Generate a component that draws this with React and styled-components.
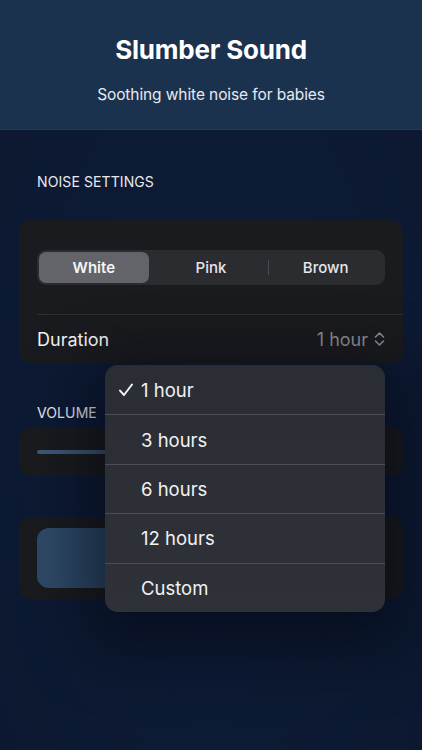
import React from 'react'
import styled, { createGlobalStyle } from 'styled-components'

const GlobalStyle = createGlobalStyle`
  html, body {
    margin: 0;
    padding: 0;
    background: #0d1a33;
  }
  body {
    font-family: Inter, "Noto Sans", "Liberation Sans", sans-serif;
    color: #f2f2f5;
    -webkit-font-smoothing: antialiased;
  }
`

function ChevronUpDown() {
  return (
    <svg width="11" height="16" viewBox="0 0 11 16" fill="none">
      <path d="M1.5 6 L5.5 2 L9.5 6" stroke="#8d8e93" strokeWidth="1.6" strokeLinecap="round" strokeLinejoin="round" />
      <path d="M1.5 10 L5.5 14 L9.5 10" stroke="#8d8e93" strokeWidth="1.6" strokeLinecap="round" strokeLinejoin="round" />
    </svg>
  )
}

function Check() {
  return (
    <svg width="16" height="16" viewBox="0 0 16 16" fill="none">
      <path d="M2 8.6 L6 13 L14 2.5" stroke="#f2f2f4" strokeWidth="2" strokeLinecap="round" strokeLinejoin="round" />
    </svg>
  )
}

function App() {
  const noises = ['White', 'Pink', 'Brown']
  const durations = ['1 hour', '3 hours', '6 hours', '12 hours', 'Custom']
  const selected = '1 hour'

  return (
    <Screen>
      <GlobalStyle />
      <Header>
        <Title>Slumber Sound</Title>
        <Subtitle>Soothing white noise for babies</Subtitle>
      </Header>

      <Body>
        <SectionLabel>Noise Settings</SectionLabel>
        <Card>
          <SegmentWrap>
            <Segmented>
              {noises.map((n, i) => (
                <Segment key={n} active={i === 0} divider={i === 2}>{n}</Segment>
              ))}
            </Segmented>
          </SegmentWrap>
          <Row>
            <RowLabel>Duration</RowLabel>
            <RowValue>
              1 hour
              <ChevronUpDown />
            </RowValue>
          </Row>

          <Menu>
            {durations.map(d => (
              <MenuItem key={d}>
                <CheckSlot>{d === selected && <Check />}</CheckSlot>
                {d}
              </MenuItem>
            ))}
          </Menu>
        </Card>

        <SectionLabel compact>Volume</SectionLabel>
        <Card>
          <SliderRow>
            <Track />
          </SliderRow>
        </Card>

        <Card spaced>
          <PlayButton>Start</PlayButton>
        </Card>
      </Body>
    </Screen>
  )
}

export default App

const Screen = styled.div`
  min-height: 750px;
  background: radial-gradient(ellipse at 50% 55%, #0f1c38 0%, #0d1a33 60%, #0c1830 100%);
`

const Header = styled.header`
  height: 130px;
  box-sizing: border-box;
  background: #1b324f;
  border-bottom: 1px solid #22395a;
  display: flex;
  flex-direction: column;
  align-items: center;
  padding-top: 34px;
`

const Title = styled.h1`
  margin: 0;
  font-size: 26px;
  line-height: 32px;
  font-weight: 700;
  color: #ffffff;
  letter-spacing: -0.2px;
`

const Subtitle = styled.p`
  margin: 19px 0 0;
  font-size: 15.5px;
  line-height: 20px;
  letter-spacing: -0.1px;
  color: #e6e9ef;
`

const Body = styled.main`
  padding-top: 43px;
`

const SectionLabel = styled.div`
  margin: ${p => (p.compact ? '41px 37px 6px' : '0 37px 30px')};
  font-size: 14px;
  line-height: 17px;
  text-transform: uppercase;
  color: #e8e9ee;
  letter-spacing: 0.1px;
`

const Card = styled.section`
  position: relative;
  margin: ${p => (p.spaced ? '41px 19px 0' : '0 19px')};
  background: #1a1b1e;
  border-radius: 12px;
  padding-left: 18px;
`

const SegmentWrap = styled.div`
  padding: 30px 18px 29px 0;
`

const Segmented = styled.div`
  display: grid;
  grid-template-columns: repeat(3, 1fr);
  height: 35px;
  padding: 2px;
  box-sizing: border-box;
  background: #2b2c30;
  border-radius: 9px;
`

const Segment = styled.div`
  position: relative;
  display: flex;
  align-items: center;
  justify-content: center;
  border-radius: 7px;
  margin-right: ${p => (p.active ? '5px' : '0')};
  font-size: 15px;
  font-weight: ${p => (p.active ? 600 : 500)};
  color: ${p => (p.active ? '#f4f4f6' : '#e6e6ea')};
  background: ${p => (p.active ? '#636469' : 'transparent')};

  &::before {
    content: '';
    display: ${p => (p.divider ? 'block' : 'none')};
    position: absolute;
    left: 0;
    top: 8px;
    bottom: 8px;
    width: 1px;
    background: #4a4b50;
  }
`

const Row = styled.div`
  display: flex;
  align-items: center;
  justify-content: space-between;
  height: 49px;
  padding-right: 18px;
  border-top: 1px solid #2f3034;
  box-sizing: border-box;
`

const RowLabel = styled.span`
  font-size: 18px;
  color: #f2f2f4;
`

const RowValue = styled.span`
  display: flex;
  align-items: center;
  gap: 6px;
  font-size: 18px;
  color: #8d8e93;
`

const Menu = styled.ul`
  position: absolute;
  z-index: 5;
  left: 86px;
  top: 145px;
  width: 280px;
  margin: 0;
  padding: 0;
  list-style: none;
  border-radius: 13px;
  overflow: hidden;
  background: linear-gradient(180deg, #2a2d33 0%, #2e3238 100%);
  box-shadow: 0 18px 60px 20px rgba(4, 8, 16, 0.55);
`

const MenuItem = styled.li`
  display: flex;
  align-items: center;
  height: 49.4px;
  box-sizing: border-box;
  padding-left: 13px;
  font-size: 18.5px;
  color: #f1f1f3;
  border-top: 1px solid #4b4e54;

  &:first-child {
    border-top: none;
  }
`

const CheckSlot = styled.span`
  display: flex;
  width: 23px;
`

const SliderRow = styled.div`
  height: 49px;
  display: flex;
  align-items: center;
  padding-right: 18px;
`

const Track = styled.div`
  width: 100%;
  height: 4px;
  border-radius: 2px;
  background: #3d5877;
`

const PlayButton = styled.button`
  display: block;
  width: calc(100% - 18px);
  margin: 0;
  height: 82px;
  box-sizing: border-box;
  border: 11px solid transparent;
  border-left: 0;
  padding: 0;
  font-family: inherit;
  font-size: 18px;
  color: #ffffff;
  background: transparent;
  position: relative;

  &::before {
    content: '';
    position: absolute;
    inset: 0;
    border-radius: 12px;
    background: linear-gradient(90deg, #2e4a68 0%, #2a4562 100%);
  }
`
